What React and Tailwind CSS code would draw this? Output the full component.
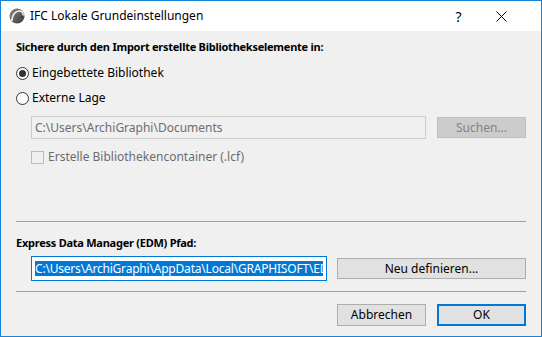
import React from 'react';

function Radio({ checked, label }) {
  return (
    <div className="flex items-center h-[16px]">
      <span className="w-[13px] h-[13px] rounded-full border border-[#333333] bg-white flex items-center justify-center">
        {checked && <span className="w-[7px] h-[7px] rounded-full bg-[#333333]" />}
      </span>
      <span className="ml-[3px] text-[12px] text-black">{label}</span>
    </div>
  );
}

function Button({ children, disabled, primary, className = '' }) {
  const base = 'h-[21px] flex items-center justify-center text-[12px]';
  if (disabled) {
    return <div className={`${base} bg-[#cccccc] border border-[#bfbfbf] text-[#838383] ${className}`}>{children}</div>;
  }
  if (primary) {
    return <div className={`${base} h-[22px] bg-[#e1e1e1] border-2 border-[#0078d7] text-black ${className}`}>{children}</div>;
  }
  return <div className={`${base} bg-[#e1e1e1] border border-[#adadad] text-black ${className}`}>{children}</div>;
}

function AppIcon() {
  return (
    <svg width="16" height="16" viewBox="0 0 16 16">
      <defs>
        <linearGradient id="ac" x1="0" y1="0" x2="1" y2="1">
          <stop offset="0" stopColor="#8a8a8a" />
          <stop offset="1" stopColor="#3a3a3a" />
        </linearGradient>
      </defs>
      <circle cx="8" cy="8" r="7.5" fill="url(#ac)" />
      <path d="M3 13 C3 6 7 2.5 11 3 C13.5 3.5 14.5 6 14 9" fill="none" stroke="#f0f0f0" strokeWidth="1.6" />
      <path d="M11.5 9 L14 7 L15.5 10" fill="#3a3a3a" />
    </svg>
  );
}

export default function App() {
  return (
    <div
      className="w-[542px] h-[337px] border border-[#1883d7] bg-[#f0f0f0] flex flex-col overflow-hidden"
      style={{ fontFamily: '"Noto Sans", "Open Sans", sans-serif' }}
    >
      {/* Title bar */}
      <div className="h-[30px] bg-white flex items-center pl-[8px] shrink-0">
        <AppIcon />
        <span className="ml-[5px] text-[12px] text-black">IFC Lokale Grundeinstellungen</span>
        <div className="ml-auto flex items-center">
          <div className="w-[39px] flex justify-center text-[14px] text-black">?</div>
          <div className="w-[46px] flex justify-center">
            <svg width="11" height="11" viewBox="0 0 11 11">
              <path d="M0.5 0.5 L10.5 10.5 M10.5 0.5 L0.5 10.5" stroke="#000" strokeWidth="1" />
            </svg>
          </div>
          <div className="w-[17px]" />
        </div>
      </div>

      {/* Content */}
      <div className="flex flex-col px-[15px]">
        <div className="mt-[8px] h-[16px] leading-[16px] text-[11px] tracking-[-0.25px] font-bold text-black">
          Sichere durch den Import erstellte Bibliothekselemente in:
        </div>

        <div className="mt-[10px]">
          <Radio checked label="Eingebettete Bibliothek" />
        </div>
        <div className="mt-[9px]">
          <Radio label="Externe Lage" />
        </div>

        <div className="mt-[10px] pl-[15px] flex items-center gap-[11px] h-[23px]">
          <div className="flex-1 h-[23px] border border-[#cccccc] flex items-center px-[3px] text-[12px] text-[#6d6d6d]">
            C:\Users\ArchiGraphi\Documents
          </div>
          <Button disabled className="w-[89px]">Suchen...</Button>
        </div>

        <div className="mt-[10px] pl-[15px] flex items-center h-[16px]">
          <span className="w-[13px] h-[13px] border border-[#bcbcbc] bg-[#f0f0f0]" />
          <span className="ml-[4px] text-[12px] text-[#6d6d6d]">Erstelle Bibliothekencontainer (.lcf)</span>
        </div>

        <div className="mt-[56px] h-px bg-[#a0a0a0]" />

        <div className="mt-[13px] h-[16px] leading-[16px] text-[11px] tracking-[-0.25px] font-bold text-black">
          Express Data Manager (EDM) Pfad:
        </div>

        <div className="mt-[5px] pl-[15px] flex items-center gap-[10px] h-[25px]">
          <div className="w-[296px] h-[25px] border border-[#0078d7] bg-white flex items-center px-[3px]">
            <span className="flex-1 min-w-0 overflow-hidden bg-[#0078d7] text-white text-[12px] leading-[15px] whitespace-nowrap tracking-[-0.2px]">
              C:\Users\ArchiGraphi\AppData\Local\GRAPHISOFT\EDMD
            </span>
          </div>
          <Button className="w-[189px]">Neu definieren...</Button>
        </div>

        <div className="mt-[10px] h-px bg-[#a0a0a0]" />

        <div className="mt-[12px] flex justify-end gap-[11px]">
          <Button className="w-[89px] h-[22px]">Abbrechen</Button>
          <Button primary className="w-[89px]">OK</Button>
        </div>
      </div>
    </div>
  );
}
